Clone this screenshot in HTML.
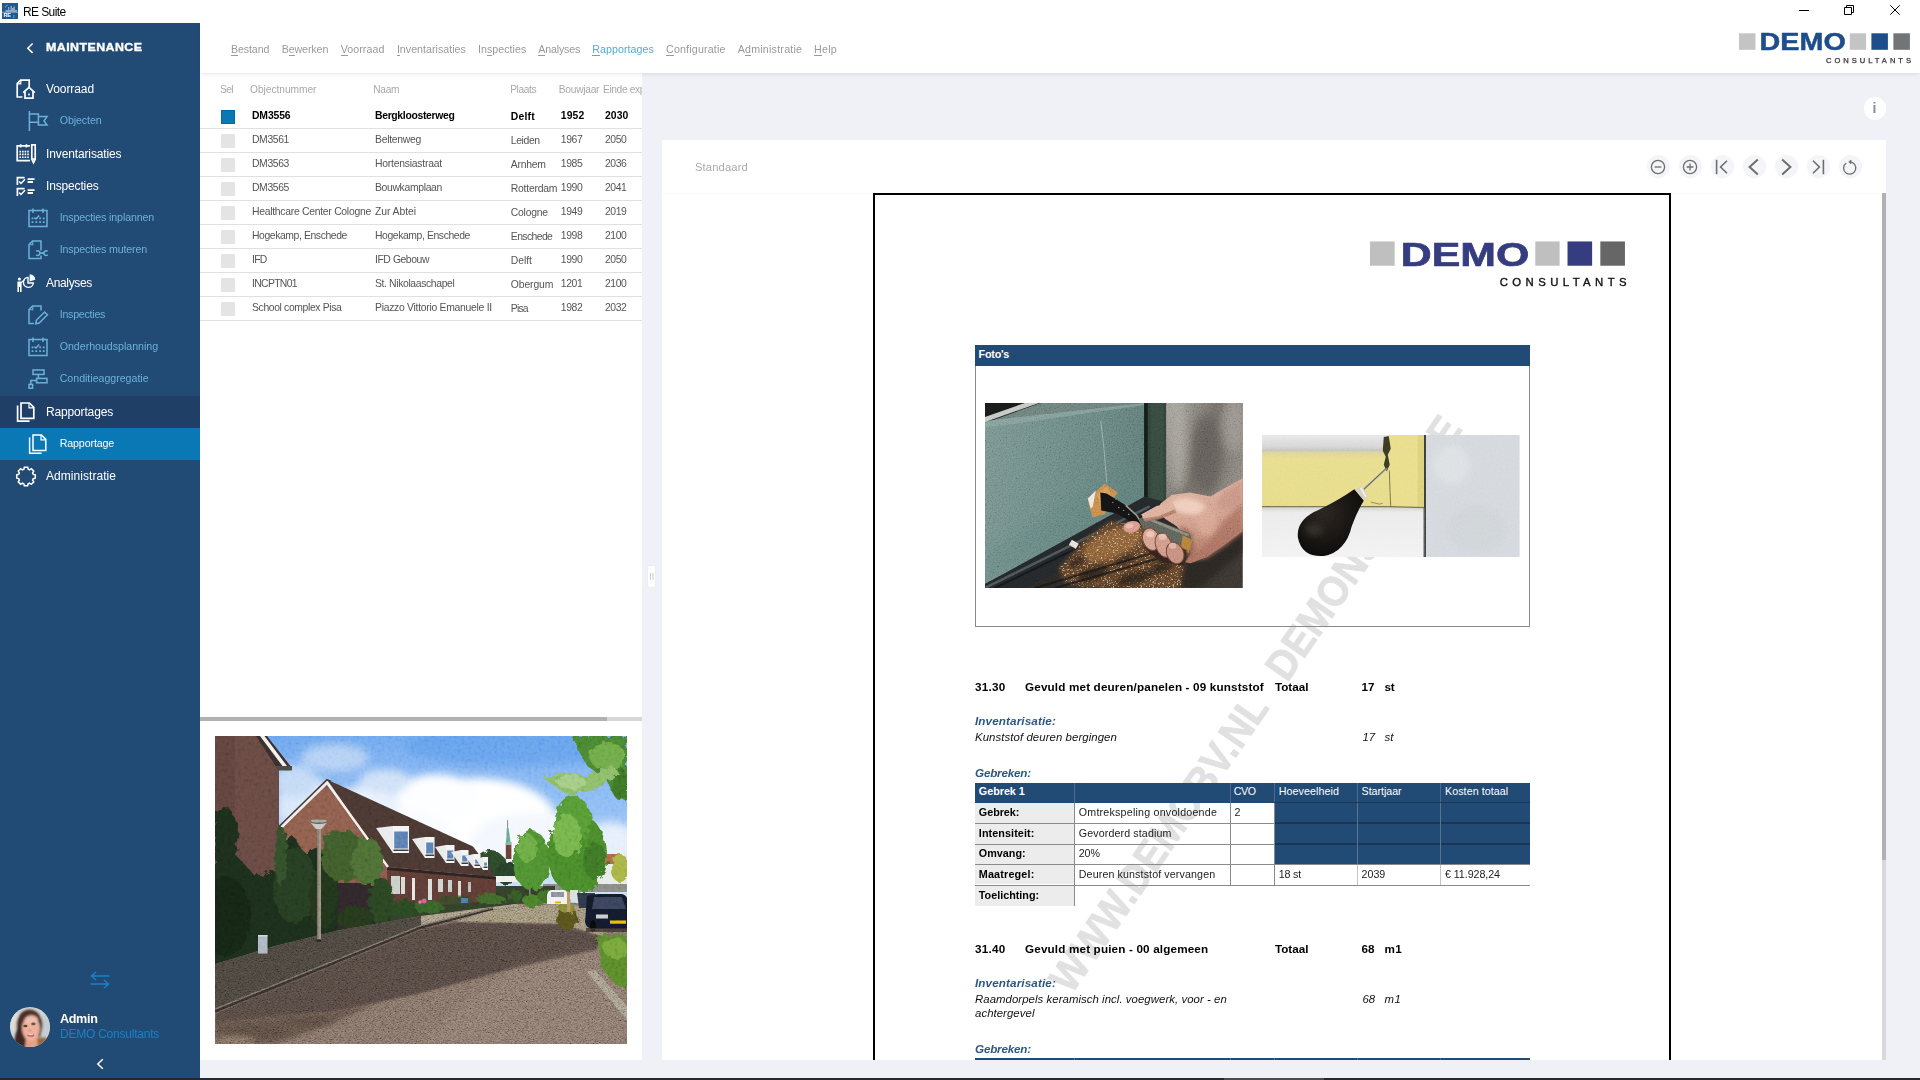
<!DOCTYPE html>
<html lang="nl"><head><meta charset="utf-8"><title>RE Suite</title><style>
*{box-sizing:border-box;margin:0;padding:0}
html,body{width:1920px;height:1080px;overflow:hidden;background:#f0f1f6;font-family:"Liberation Sans",sans-serif;}
#app{position:absolute;left:0;top:0;width:1920px;height:1080px;overflow:hidden;background:#f0f1f6}
.t{position:absolute;white-space:nowrap;}
.ic{position:absolute;overflow:visible}
.abs{position:absolute}
#sb{position:absolute;left:0;top:23px;width:200px;height:1055px;background:#214a75;overflow:hidden}
#title{position:absolute;left:0;top:0;width:1920px;height:23px;background:#fff;z-index:5}
#top{position:absolute;left:200px;top:23px;width:1720px;height:50px;background:#fff;box-shadow:0 2px 4px -1px rgba(90,95,130,.16);z-index:3}
.m{z-index:4}
u{text-decoration:underline;text-underline-offset:1.5px;text-decoration-thickness:1px}
</style></head><body><div id="app">
<div id="title">
<svg class="ic" style="left:2px;top:3px" width="16" height="16" viewBox="0 0 16 16"><rect width="16" height="16" fill="#1f5a8e"/><path d="M0 8.800H3.500V7H6V4H7.200V7H8.500V3H10V5H11.500V3.500H13V7H15V8.800H16V9.800H0Z" fill="#9db8d2" opacity=".85"/><path d="M3.200 4.800A3 3 0 0 1 6.200 2" fill="none" stroke="#39a3e6" stroke-width="1"/><rect x="11.300" y="12" width="1.200" height="3.200" fill="#39a3e6"/></svg>
<div class="t " style="left:3.60px;top:11.10px;font-size:5.60px;line-height:8px;height:8px;color:#fff;letter-spacing:-0.290px;font-weight:700;">RE</div>
<div class="t " style="left:23.00px;top:3.70px;font-size:12.00px;line-height:17px;height:17px;color:#000;letter-spacing:-0.607px;">RE Suite</div>
<svg class="ic" style="left:1798px;top:4px" width="104" height="13" viewBox="0 0 104 13" fill="none" stroke="#000" stroke-width="1"><path d="M1 6.5H11"/><path d="M46.5 3.5H53.500V10.500H46.500Z"/><path d="M48.500 3.500V1.500H55.500V8.500H53.500"/><path d="M92.300 1.300L101.700 10.700M101.700 1.300L92.300 10.700"/></svg>
</div>
<div id="top"></div>
<div class="t m" style="left:231.00px;top:41.80px;font-size:10.67px;line-height:15px;height:15px;color:#9a9a9a;letter-spacing:-0.122px;">Bestand</div>
<div class="abs m" style="left:231.00px;top:54.600px;width:7.12px;height:1px;background:#9a9a9a"></div>
<div class="t m" style="left:281.70px;top:41.80px;font-size:10.67px;line-height:15px;height:15px;color:#9a9a9a;letter-spacing:-0.106px;">Bewerken</div>
<div class="abs m" style="left:288.71px;top:54.600px;width:5.93px;height:1px;background:#9a9a9a"></div>
<div class="t m" style="left:340.70px;top:41.80px;font-size:10.67px;line-height:15px;height:15px;color:#9a9a9a;letter-spacing:0.062px;">Voorraad</div>
<div class="abs m" style="left:340.70px;top:54.600px;width:7.12px;height:1px;background:#9a9a9a"></div>
<div class="t m" style="left:396.90px;top:41.80px;font-size:10.67px;line-height:15px;height:15px;color:#9a9a9a;letter-spacing:0.020px;">Inventarisaties</div>
<div class="abs m" style="left:396.90px;top:54.600px;width:2.96px;height:1px;background:#9a9a9a"></div>
<div class="t m" style="left:478.00px;top:41.80px;font-size:10.67px;line-height:15px;height:15px;color:#9a9a9a;letter-spacing:0.026px;">Inspecties</div>
<div class="abs m" style="left:486.95px;top:54.600px;width:5.33px;height:1px;background:#9a9a9a"></div>
<div class="t m" style="left:538.30px;top:41.80px;font-size:10.67px;line-height:15px;height:15px;color:#9a9a9a;letter-spacing:-0.174px;">Analyses</div>
<div class="abs m" style="left:538.30px;top:54.600px;width:7.12px;height:1px;background:#9a9a9a"></div>
<div class="t m" style="left:592.30px;top:41.80px;font-size:10.67px;line-height:15px;height:15px;color:#57a9d3;letter-spacing:0.046px;">Rapportages</div>
<div class="abs m" style="left:592.30px;top:54.600px;width:7.71px;height:1px;background:#57a9d3"></div>
<div class="t m" style="left:666.00px;top:41.80px;font-size:10.67px;line-height:15px;height:15px;color:#9a9a9a;letter-spacing:0.181px;">Configuratie</div>
<div class="abs m" style="left:666.00px;top:54.600px;width:7.71px;height:1px;background:#9a9a9a"></div>
<div class="t m" style="left:737.70px;top:41.80px;font-size:10.67px;line-height:15px;height:15px;color:#9a9a9a;letter-spacing:0.226px;">Administratie</div>
<div class="abs m" style="left:745.04px;top:54.600px;width:5.93px;height:1px;background:#9a9a9a"></div>
<div class="t m" style="left:814.00px;top:41.80px;font-size:10.67px;line-height:15px;height:15px;color:#9a9a9a;letter-spacing:0.264px;">Help</div>
<div class="abs m" style="left:814.00px;top:54.600px;width:7.71px;height:1px;background:#9a9a9a"></div>
<svg class="ic m" style="left:1739.0px;top:33.0px" width="172.0" height="32.0" viewBox="0 0 172 32" preserveAspectRatio="none"><rect x="0" y="0.3" width="16.5" height="16.5" fill="#c4c4c4"/><text x="20.6" y="16.8" font-family="Liberation Sans, sans-serif" font-weight="700" font-size="23" fill="#1e4d8b" stroke="#1e4d8b" stroke-width="0.45" textLength="86.2" lengthAdjust="spacingAndGlyphs">DEMO</text><rect x="110.8" y="0.3" width="16.3" height="16.5" fill="#c4c4c4"/><rect x="132.4" y="0.3" width="16.5" height="16.5" fill="#1e4d8b"/><rect x="154.4" y="0.3" width="16.5" height="16.5" fill="#737478"/><text x="87" y="30.3" font-family="Liberation Sans, sans-serif" font-size="7.6" fill="#333" textLength="85" lengthAdjust="spacing" stroke="#333" stroke-width="0.25">CONSULTANTS</text></svg>
<div id="sb">
<div style="position:absolute;left:0;top:372.5px;width:200px;height:32.25px;background:#203f66"></div>
<div style="position:absolute;left:0;top:404.75px;width:200px;height:32.25px;background:#0a78b4"></div>
<svg class="ic" style="left:25px;top:18px" width="10" height="14" viewBox="0 0 10 14" fill="none" stroke="#fff" stroke-width="1.5"><path d="M7.600 2.500L2.800 7.200L7.600 11.900"/></svg>
<div class="t " style="left:45.90px;top:17.10px;font-size:10.60px;line-height:15px;height:15px;color:#fff;letter-spacing:0.378px;font-weight:700;transform-origin:0 50%;transform:scaleX(1.17);-webkit-text-stroke:0.35px #fff;">MAINTENANCE</div>
<svg class="ic" style="left:16.0px;top:56.0px" width="20" height="20" viewBox="0 0 20 20" fill="none" stroke="#fff" stroke-width="1.7" stroke-linejoin="miter" stroke-linecap="butt"><path d="M13.2 8V1.2H4.6L1.2 4.6V18H6.5"/><path d="M1.2 4.8H4.8V1.2" stroke-width="1.2"/><path d="M7.2 13.6L13 8.4L18.8 13.6M9 12.6V19.2H17V12.6"/><rect x="12.2" y="14.6" width="1.6" height="1.8" fill="#fff" stroke="none"/></svg>
<div class="t " style="left:46.00px;top:58.00px;font-size:12.00px;line-height:17px;height:17px;color:#fff;letter-spacing:-0.087px;">Voorraad</div>
<svg class="ic" style="left:27.5px;top:88.2px" width="20" height="20" viewBox="0 0 20 20" fill="none" stroke="#6bb2d9" stroke-width="1.5" stroke-linejoin="miter" stroke-linecap="butt"><path d="M1.4 0V20"/><path d="M1.4 3H10.4V11.2H1.4"/><path d="M10.4 5.6H19L16 9.8L19 14H10.4V11"/></svg>
<div class="t " style="left:59.70px;top:90.45px;font-size:10.67px;line-height:15px;height:15px;color:#6bb2d9;letter-spacing:-0.088px;">Objecten</div>
<svg class="ic" style="left:16.0px;top:120.5px" width="20" height="20" viewBox="0 0 20 20" fill="none" stroke="#fff" stroke-width="1.7" stroke-linejoin="miter" stroke-linecap="butt"><path d="M14 1.8H1.2V16.6H14"/><path d="M4.6 0.2V3.4M10.4 0.2V3.4" /><path d="M3.400 7.600H5M6 7.600H7.600M8.600 7.600H10.200M11.200 7.600H12.800M3.400 10.400H5M6 10.400H7.600M8.600 10.400H10.200M11.200 10.400H12.800M3.400 13.200H5M6 13.200H7.600M8.600 13.200H10.200M11.200 13.200H12.800" stroke-width="1.6"/><path d="M15.8 0.8H19.2V15.2L17.5 18.6L15.8 15.2Z"/><path d="M15.8 15H19.2" /></svg>
<div class="t " style="left:46.00px;top:122.50px;font-size:12.00px;line-height:17px;height:17px;color:#fff;letter-spacing:-0.125px;">Inventarisaties</div>
<svg class="ic" style="left:16.0px;top:152.8px" width="20" height="20" viewBox="0 0 20 20" fill="none" stroke="#fff" stroke-width="1.7" stroke-linejoin="miter" stroke-linecap="butt"><path d="M8.6 1.6H1.4V9M8.6 12.6H1.4V20" stroke-width="1.7"/><path d="M3.2 5.4L5 7.4L9 3.2M3.2 16.4L5 18.4L9 14.2" stroke-width="1.5"/><path d="M11.6 3.2H18.6M11.6 6H17M11.6 14.2H18.6M11.6 17H17" stroke-width="1.8"/></svg>
<div class="t " style="left:46.00px;top:154.75px;font-size:12.00px;line-height:17px;height:17px;color:#fff;letter-spacing:-0.153px;">Inspecties</div>
<svg class="ic" style="left:27.5px;top:185.0px" width="20" height="20" viewBox="0 0 20 20" fill="none" stroke="#6bb2d9" stroke-width="1.5" stroke-linejoin="miter" stroke-linecap="butt"><path d="M1 2.6H19V18.6H1Z"/><path d="M5 0.4V5M15 0.4V5"/><path d="M3.6 10.4H5.4M11.2 10.4H13M14.8 10.4H16.6M3.6 14.2H5.4M7.4 14.2H9.2M11.2 14.2H13M14.8 14.2H16.6" stroke-width="1.8"/><path d="M6.4 9.6L8 11L11.2 7.4" stroke-width="1.5"/></svg>
<div class="t " style="left:59.70px;top:187.20px;font-size:10.67px;line-height:15px;height:15px;color:#6bb2d9;letter-spacing:-0.139px;">Inspecties inplannen</div>
<svg class="ic" style="left:27.5px;top:217.2px" width="20" height="20" viewBox="0 0 20 20" fill="none" stroke="#6bb2d9" stroke-width="1.5" stroke-linejoin="miter" stroke-linecap="butt"><path d="M13 10.600V1H4.6L1 4.6V18.6H13V15.600"/><path d="M1 4.8H4.8V1" stroke-width="1.1"/><path d="M11.400 13.100H16.400" stroke-width="1.700"/><path d="M8.200 11.300A2.300 2.300 0 1 1 8.200 14.900M19.600 11.300A2.300 2.300 0 1 0 19.600 14.900" stroke-width="1.500"/></svg>
<div class="t " style="left:59.70px;top:219.45px;font-size:10.67px;line-height:15px;height:15px;color:#6bb2d9;letter-spacing:-0.147px;">Inspecties muteren</div>
<svg class="ic" style="left:16.0px;top:249.5px" width="20" height="20" viewBox="0 0 20 20" fill="none" stroke="#fff" stroke-width="1.7" stroke-linejoin="miter" stroke-linecap="butt"><circle cx="3.4" cy="6" r="1.5" fill="#fff" stroke="none"/><path d="M1.4 8.6H5.4L8.2 6.2L9 7L5.6 10V19H4V14H3V19H1.4Z" fill="#fff" stroke="none"/><path d="M12 4.4A5 5 0 1 0 17.4 10H12Z" stroke-width="1.4"/><path d="M13.6 1.2A5.4 5.4 0 0 1 19.2 6.8L13.6 8.4Z" fill="#fff" stroke="none"/></svg>
<div class="t " style="left:46.00px;top:251.50px;font-size:12.00px;line-height:17px;height:17px;color:#fff;letter-spacing:-0.336px;">Analyses</div>
<svg class="ic" style="left:27.5px;top:281.8px" width="20" height="20" viewBox="0 0 20 20" fill="none" stroke="#6bb2d9" stroke-width="1.5" stroke-linejoin="miter" stroke-linecap="butt"><path d="M13 5.4V1H4.6L1 4.6V18.6H6"/><path d="M1 4.8H4.8V1" stroke-width="1.1"/><path d="M8.4 15.2L16.6 7L19.4 9.8L11.2 18L7.8 18.8Z" stroke-width="1.5"/></svg>
<div class="t " style="left:59.70px;top:283.95px;font-size:10.67px;line-height:15px;height:15px;color:#6bb2d9;letter-spacing:-0.254px;">Inspecties</div>
<svg class="ic" style="left:27.5px;top:314.0px" width="20" height="20" viewBox="0 0 20 20" fill="none" stroke="#6bb2d9" stroke-width="1.5" stroke-linejoin="miter" stroke-linecap="butt"><path d="M1 2.6H19V18.6H1Z"/><path d="M5 0.4V5M15 0.4V5"/><path d="M3.6 10.4H5.4M11.2 10.4H13M14.8 10.4H16.6M3.6 14.2H5.4M7.4 14.2H9.2M11.2 14.2H13M14.8 14.2H16.6" stroke-width="1.8"/><path d="M6.4 9.6L8 11L11.2 7.4" stroke-width="1.5"/></svg>
<div class="t " style="left:59.70px;top:316.20px;font-size:10.67px;line-height:15px;height:15px;color:#6bb2d9;letter-spacing:-0.031px;">Onderhoudsplanning</div>
<svg class="ic" style="left:27.5px;top:346.2px" width="20" height="20" viewBox="0 0 20 20" fill="none" stroke="#6bb2d9" stroke-width="1.5" stroke-linejoin="miter" stroke-linecap="butt"><rect x="5" y="1" width="11" height="4.4"/><rect x="8.6" y="9.4" width="10.4" height="4.4"/><rect x="1" y="15.4" width="3.6" height="3.8"/><path d="M10.4 5.4V9.4M8.6 11.6H2.8V15.4"/></svg>
<div class="t " style="left:59.70px;top:348.45px;font-size:10.67px;line-height:15px;height:15px;color:#6bb2d9;letter-spacing:-0.032px;">Conditieaggregatie</div>
<svg class="ic" style="left:16.0px;top:378.5px" width="20" height="20" viewBox="0 0 20 20" fill="none" stroke="#fff" stroke-width="1.7" stroke-linejoin="miter" stroke-linecap="butt"><path d="M5 1H13.4L17.8 5.4V16.4H5Z"/><path d="M13 1.2V5.8H17.6" stroke-width="1.2"/><path d="M1.6 3.6V19.2H13.6" /></svg>
<div class="t " style="left:46.00px;top:380.50px;font-size:12.00px;line-height:17px;height:17px;color:#fff;letter-spacing:-0.155px;">Rapportages</div>
<svg class="ic" style="left:27.5px;top:410.8px" width="20" height="20" viewBox="0 0 20 20" fill="none" stroke="#fff" stroke-width="1.5" stroke-linejoin="miter" stroke-linecap="butt"><path d="M5 1H13.4L17.8 5.4V16.4H5Z"/><path d="M13 1.2V5.8H17.6" stroke-width="1.2"/><path d="M1.6 3.6V19.2H13.6" /></svg>
<div class="t " style="left:59.70px;top:412.95px;font-size:10.67px;line-height:15px;height:15px;color:#fff;letter-spacing:-0.126px;">Rapportage</div>
<svg class="ic" style="left:16.0px;top:443.0px" width="20" height="20" viewBox="0 0 20 20" fill="none" stroke="#fff" stroke-width="1.7" stroke-linejoin="miter" stroke-linecap="butt"><path d="M8.1 1.2h3.8l.5 2.2 1.6.7 2-1.2 2.6 2.7-1.2 1.9.7 1.7 2.2.5v3.8l-2.2.5-.7 1.6 1.2 2-2.7 2.6-1.9-1.2-1.7.7-.5 2.2H8.100l-.5-2.2-1.6-.7-2 1.200-2.600-2.700 1.200-1.900-.7-1.700-2.200-.5v-3.800l2.200-.5.7-1.600-1.200-2 2.700-2.600 1.900 1.200 1.700-.7z" transform="translate(10 10) scale(0.9) translate(-10 -11)"/></svg>
<div class="t " style="left:46.00px;top:445.00px;font-size:12.00px;line-height:17px;height:17px;color:#fff;letter-spacing:0.050px;">Administratie</div>
<svg class="ic" style="left:90px;top:948px" width="20" height="18" viewBox="0 0 20 18" fill="none" stroke="#1a82c4" stroke-width="1.5"><path d="M1.6 5H19.4M6 1L1.6 5L6 9M0.6 13H18.4M14 9L18.4 13L14 17"/></svg>
<svg class="ic" style="left:10px;top:984px" width="40" height="40" viewBox="0 0 40 40"><defs><clipPath id="avc"><circle cx="20" cy="20" r="20"/></clipPath><filter id="avb" x="-20%" y="-20%" width="140%" height="140%"><feGaussianBlur stdDeviation="1.1"/></filter><filter id="avb2" x="-20%" y="-20%" width="140%" height="140%"><feGaussianBlur stdDeviation="0.75"/></filter></defs><g clip-path="url(#avc)"><rect width="40" height="40" fill="#d3d6d5"/><g filter="url(#avb)"><ellipse cx="34" cy="20" rx="6" ry="12" fill="#c6ced3"/><ellipse cx="4" cy="14" rx="5" ry="10" fill="#deded8"/><ellipse cx="19.500" cy="18" rx="13" ry="15.500" fill="#4b2f28"/><path d="M7 20Q5 32 2 42H18V20Z" fill="#3f2620"/><path d="M27 16Q33 20 30.500 30L26 28Z" fill="#4b2f28"/><path d="M27 31L35.500 30L38 34L30 42H24Z" fill="#9a6a3c"/><path d="M16 29H27L28 42H15Z" fill="#e3a189"/><ellipse cx="21" cy="21.500" rx="9" ry="12.200" fill="#ecb19b"/><ellipse cx="21" cy="12.500" rx="7" ry="4.500" fill="#efbfae"/><path d="M11.500 15Q13 5.500 21 5.500Q28.500 6 30 15Q27 8.500 21.500 8.300Q15 8.500 12.500 17Z" fill="#523329"/></g><g filter="url(#avb2)"><ellipse cx="15.400" cy="19" rx="2.100" ry="1.300" fill="#5a423c"/><ellipse cx="23.400" cy="16.900" rx="2.200" ry="1.400" fill="#6b544d"/><ellipse cx="20.800" cy="28.200" rx="3.400" ry="1.500" fill="#d25a64"/><ellipse cx="20.600" cy="27.500" rx="2.500" ry="0.7" fill="#f2d7d2"/><ellipse cx="19.800" cy="23.500" rx="1.800" ry="1.100" fill="#e2987f"/></g></g></svg>
<div class="t " style="left:60.00px;top:986.60px;font-size:12.60px;line-height:18px;height:18px;color:#fff;letter-spacing:-0.339px;font-weight:700;">Admin</div>
<div class="t " style="left:60.00px;top:1003.00px;font-size:12.00px;line-height:17px;height:17px;color:#1a82c4;letter-spacing:-0.231px;">DEMO Consultants</div>
<svg class="ic" style="left:95px;top:1034px" width="10" height="14" viewBox="0 0 10 14" fill="none" stroke="#fff" stroke-width="1.5"><path d="M7.800 2.200L2.800 7L7.800 11.800"/></svg>
</div>
<div class="abs" style="left:200px;top:72px;width:442px;height:988px;background:#fff;overflow:hidden">
<div class="t " style="left:20.00px;top:10.50px;font-size:10.20px;line-height:14px;height:14px;color:#a9a9a9;letter-spacing:-0.581px;">Sel</div>
<div class="t " style="left:50.00px;top:10.50px;font-size:10.20px;line-height:14px;height:14px;color:#a9a9a9;letter-spacing:-0.032px;">Objectnummer</div>
<div class="t " style="left:173.30px;top:10.50px;font-size:10.20px;line-height:14px;height:14px;color:#a9a9a9;letter-spacing:-0.302px;">Naam</div>
<div class="t " style="left:310.20px;top:10.50px;font-size:10.20px;line-height:14px;height:14px;color:#a9a9a9;letter-spacing:-0.391px;">Plaats</div>
<div class="t " style="left:358.80px;top:10.50px;font-size:10.20px;line-height:14px;height:14px;color:#a9a9a9;letter-spacing:-0.253px;">Bouwjaar</div>
<div class="t " style="left:403.00px;top:10.50px;font-size:10.20px;line-height:14px;height:14px;color:#a9a9a9;letter-spacing:-0.374px;">Einde exp</div>
<div class="abs" style="left:21px;top:38px;width:14px;height:14px;background:#0b77b3;border:1px solid #0569a8"></div>
<div class="t " style="left:52.00px;top:35.80px;font-size:10.40px;line-height:15px;height:15px;color:#000;letter-spacing:-0.135px;font-weight:700;">DM3556</div>
<div class="t " style="left:175.00px;top:35.80px;font-size:10.40px;line-height:15px;height:15px;color:#000;letter-spacing:-0.325px;font-weight:700;">Bergkloosterweg</div>
<div class="t " style="left:310.80px;top:36.80px;font-size:10.40px;line-height:15px;height:15px;color:#000;letter-spacing:0.178px;font-weight:700;">Delft</div>
<div class="t " style="left:360.80px;top:35.80px;font-size:10.40px;line-height:15px;height:15px;color:#000;letter-spacing:0.092px;font-weight:700;">1952</div>
<div class="t " style="left:405.00px;top:35.80px;font-size:10.40px;line-height:15px;height:15px;color:#000;letter-spacing:0.092px;font-weight:700;">2030</div>
<div class="abs" style="left:0;top:56px;width:442px;height:1px;background:#e0e0e0"></div>
<div class="abs" style="left:21px;top:62px;width:14px;height:14px;background:#e4e4e4"></div>
<div class="t " style="left:52.00px;top:59.80px;font-size:10.40px;line-height:15px;height:15px;color:#555;letter-spacing:-0.385px;">DM3561</div>
<div class="t " style="left:175.00px;top:59.80px;font-size:10.40px;line-height:15px;height:15px;color:#555;letter-spacing:-0.285px;">Beltenweg</div>
<div class="t " style="left:310.80px;top:60.80px;font-size:10.40px;line-height:15px;height:15px;color:#555;letter-spacing:-0.371px;">Leiden</div>
<div class="t " style="left:360.80px;top:59.80px;font-size:10.40px;line-height:15px;height:15px;color:#555;letter-spacing:-0.408px;">1967</div>
<div class="t " style="left:405.00px;top:59.80px;font-size:10.40px;line-height:15px;height:15px;color:#555;letter-spacing:-0.408px;">2050</div>
<div class="abs" style="left:0;top:80px;width:442px;height:1px;background:#e0e0e0"></div>
<div class="abs" style="left:21px;top:86px;width:14px;height:14px;background:#e4e4e4"></div>
<div class="t " style="left:52.00px;top:83.80px;font-size:10.40px;line-height:15px;height:15px;color:#555;letter-spacing:-0.385px;">DM3563</div>
<div class="t " style="left:175.00px;top:83.80px;font-size:10.40px;line-height:15px;height:15px;color:#555;letter-spacing:-0.234px;">Hortensiastraat</div>
<div class="t " style="left:310.80px;top:84.80px;font-size:10.40px;line-height:15px;height:15px;color:#555;letter-spacing:-0.236px;">Arnhem</div>
<div class="t " style="left:360.80px;top:83.80px;font-size:10.40px;line-height:15px;height:15px;color:#555;letter-spacing:-0.408px;">1985</div>
<div class="t " style="left:405.00px;top:83.80px;font-size:10.40px;line-height:15px;height:15px;color:#555;letter-spacing:-0.408px;">2036</div>
<div class="abs" style="left:0;top:104px;width:442px;height:1px;background:#e0e0e0"></div>
<div class="abs" style="left:21px;top:110px;width:14px;height:14px;background:#e4e4e4"></div>
<div class="t " style="left:52.00px;top:107.80px;font-size:10.40px;line-height:15px;height:15px;color:#555;letter-spacing:-0.385px;">DM3565</div>
<div class="t " style="left:175.00px;top:107.80px;font-size:10.40px;line-height:15px;height:15px;color:#555;letter-spacing:-0.342px;">Bouwkamplaan</div>
<div class="t " style="left:310.80px;top:108.80px;font-size:10.40px;line-height:15px;height:15px;color:#555;letter-spacing:-0.228px;">Rotterdam</div>
<div class="t " style="left:360.80px;top:107.80px;font-size:10.40px;line-height:15px;height:15px;color:#555;letter-spacing:-0.408px;">1990</div>
<div class="t " style="left:405.00px;top:107.80px;font-size:10.40px;line-height:15px;height:15px;color:#555;letter-spacing:-0.408px;">2041</div>
<div class="abs" style="left:0;top:128px;width:442px;height:1px;background:#e0e0e0"></div>
<div class="abs" style="left:21px;top:134px;width:14px;height:14px;background:#e4e4e4"></div>
<div class="t " style="left:52.00px;top:131.80px;font-size:10.40px;line-height:15px;height:15px;color:#555;letter-spacing:-0.281px;">Healthcare Center Cologne</div>
<div class="t " style="left:175.00px;top:131.80px;font-size:10.40px;line-height:15px;height:15px;color:#555;letter-spacing:-0.069px;">Zur Abtei</div>
<div class="t " style="left:310.80px;top:132.80px;font-size:10.40px;line-height:15px;height:15px;color:#555;letter-spacing:-0.248px;">Cologne</div>
<div class="t " style="left:360.80px;top:131.80px;font-size:10.40px;line-height:15px;height:15px;color:#555;letter-spacing:-0.408px;">1949</div>
<div class="t " style="left:405.00px;top:131.80px;font-size:10.40px;line-height:15px;height:15px;color:#555;letter-spacing:-0.408px;">2019</div>
<div class="abs" style="left:0;top:152px;width:442px;height:1px;background:#e0e0e0"></div>
<div class="abs" style="left:21px;top:158px;width:14px;height:14px;background:#e4e4e4"></div>
<div class="t " style="left:52.00px;top:155.80px;font-size:10.40px;line-height:15px;height:15px;color:#555;letter-spacing:-0.407px;">Hogekamp, Enschede</div>
<div class="t " style="left:175.00px;top:155.80px;font-size:10.40px;line-height:15px;height:15px;color:#555;letter-spacing:-0.407px;">Hogekamp, Enschede</div>
<div class="t " style="left:310.80px;top:156.80px;font-size:10.40px;line-height:15px;height:15px;color:#555;letter-spacing:-0.594px;">Enschede</div>
<div class="t " style="left:360.80px;top:155.80px;font-size:10.40px;line-height:15px;height:15px;color:#555;letter-spacing:-0.408px;">1998</div>
<div class="t " style="left:405.00px;top:155.80px;font-size:10.40px;line-height:15px;height:15px;color:#555;letter-spacing:-0.408px;">2100</div>
<div class="abs" style="left:0;top:176px;width:442px;height:1px;background:#e0e0e0"></div>
<div class="abs" style="left:21px;top:182px;width:14px;height:14px;background:#e4e4e4"></div>
<div class="t " style="left:52.00px;top:179.80px;font-size:10.40px;line-height:15px;height:15px;color:#555;letter-spacing:-0.751px;">IFD</div>
<div class="t " style="left:175.00px;top:179.80px;font-size:10.40px;line-height:15px;height:15px;color:#555;letter-spacing:-0.437px;">IFD Gebouw</div>
<div class="t " style="left:310.80px;top:180.80px;font-size:10.40px;line-height:15px;height:15px;color:#555;letter-spacing:-0.077px;">Delft</div>
<div class="t " style="left:360.80px;top:179.80px;font-size:10.40px;line-height:15px;height:15px;color:#555;letter-spacing:-0.408px;">1990</div>
<div class="t " style="left:405.00px;top:179.80px;font-size:10.40px;line-height:15px;height:15px;color:#555;letter-spacing:-0.408px;">2050</div>
<div class="abs" style="left:0;top:200px;width:442px;height:1px;background:#e0e0e0"></div>
<div class="abs" style="left:21px;top:206px;width:14px;height:14px;background:#e4e4e4"></div>
<div class="t " style="left:52.00px;top:203.80px;font-size:10.40px;line-height:15px;height:15px;color:#555;letter-spacing:-0.660px;">INCPTN01</div>
<div class="t " style="left:175.00px;top:203.80px;font-size:10.40px;line-height:15px;height:15px;color:#555;letter-spacing:-0.368px;">St. Nikolaaschapel</div>
<div class="t " style="left:310.80px;top:204.80px;font-size:10.40px;line-height:15px;height:15px;color:#555;letter-spacing:-0.121px;">Obergum</div>
<div class="t " style="left:360.80px;top:203.80px;font-size:10.40px;line-height:15px;height:15px;color:#555;letter-spacing:-0.408px;">1201</div>
<div class="t " style="left:405.00px;top:203.80px;font-size:10.40px;line-height:15px;height:15px;color:#555;letter-spacing:-0.408px;">2100</div>
<div class="abs" style="left:0;top:224px;width:442px;height:1px;background:#e0e0e0"></div>
<div class="abs" style="left:21px;top:230px;width:14px;height:14px;background:#e4e4e4"></div>
<div class="t " style="left:52.00px;top:227.80px;font-size:10.40px;line-height:15px;height:15px;color:#555;letter-spacing:-0.370px;">School complex Pisa</div>
<div class="t " style="left:175.00px;top:227.80px;font-size:10.40px;line-height:15px;height:15px;color:#555;letter-spacing:-0.284px;">Piazzo Vittorio Emanuele II</div>
<div class="t " style="left:310.80px;top:228.80px;font-size:10.40px;line-height:15px;height:15px;color:#555;letter-spacing:-0.808px;">Pisa</div>
<div class="t " style="left:360.80px;top:227.80px;font-size:10.40px;line-height:15px;height:15px;color:#555;letter-spacing:-0.408px;">1982</div>
<div class="t " style="left:405.00px;top:227.80px;font-size:10.40px;line-height:15px;height:15px;color:#555;letter-spacing:-0.408px;">2032</div>
<div class="abs" style="left:0;top:248px;width:442px;height:1px;background:#e0e0e0"></div>
<div class="abs" style="left:0;top:645px;width:442px;height:4px;background:#d6d6d6"></div>
<div class="abs" style="left:0;top:645px;width:407px;height:4px;background:#b1b1b1"></div>
<svg class="ic" style="left:15px;top:664px;overflow:hidden" width="412" height="308" viewBox="0 0 412 308">
<defs>
<linearGradient id="sky" x1="0" y1="0" x2="0" y2="1"><stop offset="0" stop-color="#6aa5ee"/><stop offset="0.18" stop-color="#8dbaf2"/><stop offset="0.4" stop-color="#c6dcf7"/><stop offset="1" stop-color="#e6eefa"/></linearGradient>
<linearGradient id="skyr" x1="0" y1="0" x2="1" y2="0"><stop offset="0" stop-color="#7fb0ee" stop-opacity="0"/><stop offset="1" stop-color="#86b9f6" stop-opacity=".55"/></linearGradient>
<filter id="b2" x="-10%" y="-10%" width="120%" height="120%"><feGaussianBlur stdDeviation="2"/></filter>
<filter id="b1" x="-10%" y="-10%" width="120%" height="120%"><feGaussianBlur stdDeviation="1"/></filter>
<filter id="b4" x="-20%" y="-20%" width="140%" height="140%"><feGaussianBlur stdDeviation="4.5"/></filter>
<filter id="leaf" x="-10%" y="-10%" width="120%" height="120%"><feTurbulence type="fractalNoise" baseFrequency="0.16" numOctaves="2" seed="4" result="n"/><feDisplacementMap in="SourceGraphic" in2="n" scale="9"/><feGaussianBlur stdDeviation="0.6"/></filter>
<filter id="grain" x="0" y="0" width="100%" height="100%"><feTurbulence type="fractalNoise" baseFrequency="0.6 0.9" numOctaves="2" seed="7"/><feColorMatrix type="matrix" values="1.6 0 0 0 -0.3  1.6 0 0 0 -0.3  1.6 0 0 0 -0.3  0 0 0 0 1"/></filter>

<filter id="lgrain" x="0" y="0" width="100%" height="100%"><feTurbulence type="fractalNoise" baseFrequency="0.3" numOctaves="2" seed="3"/><feColorMatrix type="matrix" values="1.8 0 0 0 -0.4  1.8 0 0 0 -0.4  1.8 0 0 0 -0.4  0 0 0 0 1"/></filter>
<clipPath id="road"><path d="M0 228L60 210L125 194L206 180L300 168L345 166L412 170V308H0Z"/></clipPath>
<clipPath id="green"><path d="M0 70H65V140H175V154H206V185H125L0 228Z"/></clipPath>
</defs>
<rect width="412" height="308" fill="url(#sky)"/><rect width="412" height="130" fill="url(#skyr)"/>
<g filter="url(#b4)"><ellipse cx="300" cy="10" rx="110" ry="20" fill="#5b99ea" opacity=".6"/><ellipse cx="262" cy="86" rx="80" ry="44" fill="#fff"/><ellipse cx="222" cy="62" rx="42" ry="24" fill="#fdfeff"/><ellipse cx="320" cy="104" rx="64" ry="28" fill="#f4f8fe"/><ellipse cx="190" cy="104" rx="50" ry="32" fill="#fafcff"/><ellipse cx="92" cy="70" rx="30" ry="30" fill="#d9e8fa"/><ellipse cx="395" cy="108" rx="30" ry="22" fill="#e6effb"/><ellipse cx="120" cy="22" rx="34" ry="14" fill="#b4d0f5"/><ellipse cx="150" cy="70" rx="34" ry="20" fill="#e8f1fc"/><ellipse cx="170" cy="45" rx="26" ry="12" fill="#cfe1f8"/><ellipse cx="80" cy="45" rx="22" ry="16" fill="#c3daf6"/></g>
<g filter="url(#leaf)"><ellipse cx="275" cy="130" rx="16" ry="16" fill="#2d4a2b"/><ellipse cx="292" cy="137" rx="12" ry="11" fill="#26402a"/></g>
<path d="M292.600 84V92" stroke="#667" stroke-width="0.8"/><path d="M291 108L291.800 92H293.600L295.800 108Z" fill="#6fa893"/><rect x="290.600" y="106" width="6" height="3" fill="#7fb59f"/><rect x="290.800" y="109" width="5.600" height="14" fill="#6b4036"/>
<rect x="372" y="128" width="40" height="22" fill="#e9ebe6"/><path d="M382 128L392 118H404L408 128Z" fill="#b06a48"/><g filter="url(#leaf)"><ellipse cx="405" cy="132" rx="9" ry="14" fill="#a9b344"/></g><rect x="328" y="148" width="84" height="8" fill="#8a8a86"/><rect x="278" y="140" width="24" height="6" fill="#eef0ee"/>
<rect x="170" y="150" width="170" height="40" fill="#33402a"/>
<path d="M112 43.500L258 110.500L281 141L172 131Z" fill="#4a3832"/>

<path d="M172 131L281 141V165L172 172Z" fill="#5e3c34"/><path d="M172 131L281 141V143.500L172 134Z" fill="#2c2220"/>
<rect x="176" y="140" width="9" height="18" fill="#c9cfc8"/><rect x="186" y="141" width="4" height="17" fill="#d8dcd6"/><rect x="197" y="142" width="3" height="22" fill="#e6e6e2"/><rect x="213" y="143" width="4" height="21" fill="#d9dcd8"/><rect x="223" y="143" width="5" height="13" fill="#cfd3cc"/><rect x="233" y="144" width="4" height="12" fill="#c9cdc6"/><rect x="243" y="145" width="3" height="18" fill="#d8d8d4"/><rect x="253" y="146" width="3" height="10" fill="#bbb"/>
<path d="M161.0 92.0L178.0 90.0L178.0 117.0Z" fill="#e9ebec"/>
<rect x="178.0" y="90.0" width="16.0" height="27.0" fill="#f2f3f3"/>
<rect x="179.2" y="95.5" width="13.6" height="17.0" fill="#5b7fb2"/>
<rect x="178.5" y="113.5" width="15.0" height="1.5" fill="#3a3a3a"/>
<path d="M197.0 103.0L210.0 101.0L210.0 122.0Z" fill="#e9ebec"/>
<rect x="210.0" y="101.0" width="9.5" height="21.0" fill="#f2f3f3"/>
<rect x="211.2" y="106.5" width="7.1" height="11.0" fill="#5b7fb2"/>
<rect x="210.5" y="118.5" width="8.5" height="1.5" fill="#3a3a3a"/>
<path d="M220.0 111.0L231.0 109.0L231.0 127.0Z" fill="#e9ebec"/>
<rect x="231.0" y="109.0" width="8.5" height="18.0" fill="#f2f3f3"/>
<rect x="232.2" y="114.5" width="6.1" height="8.0" fill="#5b7fb2"/>
<rect x="231.5" y="123.5" width="7.5" height="1.5" fill="#3a3a3a"/>
<path d="M236.0 116.0L246.0 114.0L246.0 130.0Z" fill="#e9ebec"/>
<rect x="246.0" y="114.0" width="7.5" height="16.0" fill="#f2f3f3"/>
<rect x="247.2" y="119.5" width="5.1" height="6.0" fill="#5b7fb2"/>
<rect x="246.5" y="126.5" width="6.5" height="1.5" fill="#3a3a3a"/>
<path d="M250.0 120.0L259.0 118.0L259.0 132.0Z" fill="#e9ebec"/>
<rect x="259.0" y="118.0" width="6.5" height="14.0" fill="#f2f3f3"/>
<rect x="260.2" y="123.5" width="4.1" height="4.0" fill="#5b7fb2"/>
<rect x="259.5" y="128.5" width="5.5" height="1.5" fill="#3a3a3a"/>
<path d="M261.0 123.0L268.0 121.0L268.0 134.0Z" fill="#e9ebec"/>
<rect x="268.0" y="121.0" width="5.0" height="13.0" fill="#f2f3f3"/>
<rect x="269.2" y="126.5" width="2.6" height="3.0" fill="#5b7fb2"/>
<rect x="268.5" y="130.5" width="4.0" height="1.5" fill="#3a3a3a"/>
<path d="M112 49L63 96V160H172V131Z" fill="#87594c"/>
<path d="M112 49L146 94L120 140L85 150L64 120L63 96Z" fill="#94624f" opacity=".6" filter="url(#b2)"/>
<path d="M63 95L112 46.500L173 131" fill="none" stroke="#f4f1ec" stroke-width="2.200"/>
<path d="M62 92.500L112 43.800L116 45.500" fill="none" stroke="#4a3832" stroke-width="1.600"/>
<path d="M0 0H44L64 32V160H0Z" fill="#684943"/><path d="M0 0H20V160H0Z" fill="#5e403b" opacity=".6"/>
<path d="M41 0L63 33.500H76L77 32L52 0Z" fill="#3a2d2b"/><path d="M45 0L67.500 30H72L49.500 0Z" fill="#f3f1ee"/><path d="M60 30H77V34.500H63Z" fill="#4a4846"/>
<path d="M0 130H20V150H175V190L60 215L0 234Z" fill="#1f2f1d"/>
<path d="M123 147H156V188L123 198Z" fill="#30272a"/>
<g filter="url(#leaf)">
<path d="M0 75L14 72L24 90L22 120L40 140L62 135L66 108L78 100L90 118L100 112L122 118V196L60 214L0 232Z" fill="#1e2e1c"/>
<ellipse cx="10" cy="180" rx="26" ry="40" fill="#182618"/><ellipse cx="80" cy="150" rx="22" ry="38" fill="#263c20"/><ellipse cx="108" cy="162" rx="14" ry="30" fill="#22361e"/>
<ellipse cx="128" cy="120" rx="22" ry="26" fill="#3f5c2c"/><ellipse cx="152" cy="125" rx="16" ry="24" fill="#4d6e34"/><ellipse cx="118" cy="105" rx="10" ry="10" fill="#3f5d2e"/>
<ellipse cx="166" cy="165" rx="12" ry="24" fill="#2a4424"/><ellipse cx="140" cy="182" rx="18" ry="12" fill="#26391f"/><ellipse cx="190" cy="172" rx="14" ry="9" fill="#2b4a22"/><ellipse cx="214" cy="171" rx="14" ry="7" fill="#39642a"/>
<ellipse cx="66" cy="120" rx="6" ry="30" fill="#33502a"/>
</g>
<circle cx="209" cy="165" r="2.500" fill="#d65a8e"/><circle cx="205" cy="166" r="1.800" fill="#e07aa5"/>
<rect x="225" y="160" width="30" height="8" fill="#3a4a2c" filter="url(#b1)"/><rect x="246" y="162" width="7" height="5" fill="#4a7ab0"/>
<g filter="url(#leaf)"><ellipse cx="276" cy="163" rx="14" ry="5" fill="#3f6a2a"/><ellipse cx="300" cy="160" rx="8" ry="6" fill="#355a28"/></g>
<path d="M0 228L60 210L125 194L206 180L300 168L345 166L412 170V308H0Z" fill="#74645a"/>
<path d="M0 228L60 210L125 194L206 180L240 175L206 192L0 276Z" fill="#423d37"/>
<path d="M206 180L300 168L310 170L278 173L206 192Z" fill="#958a74"/>
<path d="M278 173L345 168L388 172V200L345 188L240 186Z" fill="#8f826c"/>
<path d="M0 277L206 193L240 186L345 188L387 201L381 214L300 232L206 257L120 276L40 283L0 290Z" fill="#4c3f3a" filter="url(#b1)"/>
<path d="M0 286L40 282L120 275L160 268L110 290L60 308H0Z" fill="#574840" filter="url(#b2)"/>
<g filter="url(#b2)" opacity=".6"><ellipse cx="40" cy="296" rx="30" ry="5" fill="#4d3f39"/><ellipse cx="95" cy="286" rx="24" ry="4" fill="#4d3f39"/><ellipse cx="20" cy="304" rx="20" ry="4" fill="#8a7766"/></g>
<path d="M300 232L381 214L412 250V308H200L260 260Z" fill="#84746a" opacity=".4" filter="url(#b4)"/>
<path d="M0 275.500L206 191.500L278 172.500" fill="none" stroke="#2f2a28" stroke-width="2.400"/>
<path d="M0 273L206 189.500L278 171.500" fill="none" stroke="#6a635a" stroke-width="1.500"/>
<path d="M372 236L380 234L412 270V284Z" fill="#968c7c"/>
<g clip-path="url(#road)" style="mix-blend-mode:overlay" opacity=".36"><rect x="0" y="165" width="412" height="143" filter="url(#grain)"/></g>
<rect x="43" y="199" width="9.500" height="18.500" fill="#aeb6c2"/><rect x="43" y="199" width="9.500" height="1.500" fill="#cfd5dc"/>
<rect x="102.400" y="91" width="3.600" height="113" fill="#9a9284"/><rect x="102.400" y="91" width="1.200" height="113" fill="#7d766a"/><ellipse cx="103.800" cy="204.500" rx="2.600" ry="1.200" fill="#222"/>
<path d="M94.500 85.500Q103.500 81.500 112.800 85.500L106.500 93H101Z" fill="#c9c9c2"/><ellipse cx="103.700" cy="85.500" rx="9.200" ry="2.400" fill="#5d5b55"/><ellipse cx="103.700" cy="85" rx="8.200" ry="1.600" fill="#a9a9a2"/>
<rect x="352" y="146" width="3.400" height="30" fill="#b89a62"/><rect x="314" y="150" width="1.500" height="18" fill="#777"/>
<g filter="url(#leaf)">
<ellipse cx="316" cy="124" rx="18" ry="30" fill="#4f9030"/><ellipse cx="312" cy="112" rx="10" ry="14" fill="#6cab45"/>
<ellipse cx="362" cy="118" rx="30" ry="40" fill="#4a8a2c"/><ellipse cx="358" cy="84" rx="18" ry="24" fill="#579a34"/><ellipse cx="352" cy="100" rx="14" ry="22" fill="#74b44c"/><ellipse cx="380" cy="125" rx="12" ry="18" fill="#3c7726"/>
<path d="M356 0H412V66L398 58L392 44L372 30L362 12Z" fill="#4a8530"/><ellipse cx="392" cy="20" rx="18" ry="14" fill="#6faa48"/><ellipse cx="405" cy="48" rx="8" ry="16" fill="#3c7427"/>
<path d="M328 42L345 36L372 40L398 30L404 38L380 52L356 60L342 52Z" fill="#8cbd68"/><ellipse cx="356" cy="46" rx="14" ry="7" fill="#a4cc84"/>
<path d="M383 202L396 198L412 199V254L398 246L384 228Z" fill="#5a8a2c"/><ellipse cx="400" cy="212" rx="12" ry="10" fill="#76a63a"/>
<ellipse cx="352" cy="182" rx="10.500" ry="12" fill="#58521f"/><ellipse cx="352" cy="172" rx="8" ry="5" fill="#8a8a3a"/>
<ellipse cx="318" cy="165" rx="10" ry="6" fill="#4a7f2a"/><ellipse cx="330" cy="160" rx="8" ry="6" fill="#3f7026"/>
</g>
<path d="M332 159Q333 154 337 154H349Q351.500 154 352 158V168H332Z" fill="#f0f0f2"/><rect x="336" y="156" width="13" height="5" fill="#8d939c"/><rect x="340" y="165.500" width="6" height="1.800" fill="#e0b400"/><rect x="355" y="154" width="8" height="9" fill="#ddd"/>
<path d="M362 157H380V172H364Z" fill="#2f3a4a"/>
<path d="M372 160Q376 158 384 158H406Q410 158 412 162V193H378Q371 192 370 186Z" fill="#141a2c"/><path d="M379 161H407L411 173H377Z" fill="#39445a"/><rect x="381" y="178.500" width="12" height="4" fill="#c9cdd0"/><rect x="395" y="184.500" width="16" height="3.200" fill="#e4c000"/><ellipse cx="378" cy="190" rx="3" ry="6" fill="#0a0a0c"/><rect x="371" y="192" width="41" height="4" fill="#3a332f" opacity=".8"/>
<rect x="352" y="164" width="3.400" height="12" fill="#b89a62"/>
<g style="mix-blend-mode:overlay" opacity=".10"><rect width="412" height="308" filter="url(#lgrain)"/></g>
</svg>
</div>
<div class="abs" style="left:648px;top:566px;width:7px;height:21px;background:#fff;border-radius:1px;box-shadow:0 0 1px rgba(0,0,0,.15)"></div>
<div class="abs" style="left:650px;top:573px;width:1px;height:7px;background:#ccc"></div><div class="abs" style="left:652px;top:573px;width:2px;height:7px;background:#e2e2e2"></div>
<div class="abs" style="left:662px;top:140px;width:1224px;height:920px;background:#fff"></div>
<div class="t " style="left:695.00px;top:159.20px;font-size:11.20px;line-height:16px;height:16px;color:#aaa;letter-spacing:0.147px;">Standaard</div>
<div class="abs" style="left:662.0px;top:193.0px;width:1220.0px;height:1px;background:#fafafb"></div>
<div class="abs" style="left:1646.5px;top:155.2px;width:23px;height:23px;border-radius:50%;background:#f4f5f9"></div><svg class="ic" style="left:1648.0px;top:156.7px" width="20" height="20" viewBox="0 0 20 20" fill="none" stroke="#6e6e6e" stroke-width="1.3"><circle cx="10" cy="10" r="6.6"/><path d="M6.600 10H13.400"/></svg>
<div class="abs" style="left:1678.5px;top:155.2px;width:23px;height:23px;border-radius:50%;background:#f4f5f9"></div><svg class="ic" style="left:1680.0px;top:156.7px" width="20" height="20" viewBox="0 0 20 20" fill="none" stroke="#6e6e6e" stroke-width="1.3"><circle cx="10" cy="10" r="6.6"/><path d="M6.600 10H13.400M10 6.600V13.400"/></svg>
<div class="abs" style="left:1710.5px;top:155.2px;width:23px;height:23px;border-radius:50%;background:#f4f5f9"></div><svg class="ic" style="left:1712.0px;top:156.7px" width="20" height="20" viewBox="0 0 20 20" fill="none" stroke="#6e6e6e" stroke-width="1.3"><path d="M4.600 2.800V17.200" stroke-width="1.6"/><path d="M15 3.800L8.600 10L15 16.200" stroke-width="1.6"/></svg>
<div class="abs" style="left:1742.5px;top:155.2px;width:23px;height:23px;border-radius:50%;background:#f4f5f9"></div><svg class="ic" style="left:1744.0px;top:156.7px" width="20" height="20" viewBox="0 0 20 20" fill="none" stroke="#6e6e6e" stroke-width="1.3"><path d="M13.800 2.400L5.600 10L13.800 17.600" stroke-width="2"/></svg>
<div class="abs" style="left:1774.5px;top:155.2px;width:23px;height:23px;border-radius:50%;background:#f4f5f9"></div><svg class="ic" style="left:1776.0px;top:156.7px" width="20" height="20" viewBox="0 0 20 20" fill="none" stroke="#6e6e6e" stroke-width="1.3"><path d="M6.200 2.400L14.400 10L6.200 17.600" stroke-width="2"/></svg>
<div class="abs" style="left:1806.5px;top:155.2px;width:23px;height:23px;border-radius:50%;background:#f4f5f9"></div><svg class="ic" style="left:1808.0px;top:156.7px" width="20" height="20" viewBox="0 0 20 20" fill="none" stroke="#6e6e6e" stroke-width="1.3"><path d="M15.400 2.800V17.200" stroke-width="1.6"/><path d="M5 3.800L11.400 10L5 16.200" stroke-width="1.6"/></svg>
<div class="abs" style="left:1838.5px;top:155.2px;width:23px;height:23px;border-radius:50%;background:#f4f5f9"></div><svg class="ic" style="left:1840.0px;top:156.7px" width="20" height="20" viewBox="0 0 20 20" fill="none" stroke="#6e6e6e" stroke-width="1.3"><path d="M9.600 4.900A6.100 6.100 0 1 1 6.200 6"/><path d="M11 3L8.800 4.900L11 6.800Z" stroke-width="0.8" fill="#6e6e6e"/></svg>
<div class="abs" style="left:1863.5px;top:97px;width:22.5px;height:22.5px;border-radius:50%;background:#fff"></div>
<div class="t" style="left:1872.4px;top:98.6px;font-size:14.2px;line-height:18px;color:#858da0;font-weight:700;transform:scaleX(1.0);transform-origin:0 0">i</div>
<div class="abs" style="left:1882.0px;top:193.0px;width:4.0px;height:867.0px;background:#d9d9d9;"></div>
<div class="abs" style="left:1882.0px;top:193.0px;width:4.0px;height:667.0px;background:#b1b1b1;"></div>
<div class="abs" style="left:873px;top:193px;width:798px;height:867px;overflow:hidden"><div class="abs" style="left:0;top:0;width:798px;height:900px;border:2px solid #000;background:#fff"></div></div>
<svg class="ic" style="left:873px;top:193px;overflow:hidden" width="798" height="867" viewBox="873 193 798 867"><text transform="translate(1071.2 995.3) rotate(-55.30) scale(1 1.09)" font-family="Liberation Sans, sans-serif" font-weight="700" font-size="39.0" fill="#e1e1e1" stroke="#e1e1e1" stroke-width="0.7" word-spacing="20.0" xml:space="preserve">WWW.DEMOBV.NL DEMONSTRATIE</text></svg>
<svg class="ic m" style="left:1370.0px;top:241.0px" width="256.6" height="47.1" viewBox="0 0 172 32" preserveAspectRatio="none"><rect x="0" y="0.3" width="16.5" height="16.5" fill="#bfbfbf"/><text x="20.6" y="16.8" font-family="Liberation Sans, sans-serif" font-weight="700" font-size="23" fill="#353c7f" stroke="#353c7f" stroke-width="0.45" textLength="86.2" lengthAdjust="spacingAndGlyphs">DEMO</text><rect x="110.8" y="0.3" width="16.3" height="16.5" fill="#bfbfbf"/><rect x="132.4" y="0.3" width="16.5" height="16.5" fill="#353c7f"/><rect x="154.4" y="0.3" width="16.5" height="16.5" fill="#666"/><text x="87" y="30.3" font-family="Liberation Sans, sans-serif" font-size="7.6" fill="#111" textLength="85" lengthAdjust="spacing" stroke="#111" stroke-width="0.25">CONSULTANTS</text></svg>
<div class="abs" style="left:974.5px;top:345.0px;width:555.5px;height:281.5px;background:transparent;border:1px solid #8a8a8a;"></div>
<div class="abs" style="left:974.5px;top:345.0px;width:555.5px;height:20.5px;background:#214a75;"></div>
<div class="t " style="left:978.60px;top:346.50px;font-size:10.80px;line-height:15px;height:15px;color:#fff;letter-spacing:-0.243px;font-weight:700;">Foto's</div>
<svg class="ic" style="left:985px;top:403.300px;overflow:hidden" width="257.500" height="185" viewBox="0 0 258 186" preserveAspectRatio="none">
<defs>
<linearGradient id="teal" x1="0" y1="0" x2="1" y2="0.25"><stop offset="0" stop-color="#78938e"/><stop offset="0.5" stop-color="#6c8884"/><stop offset="1" stop-color="#5f7a76"/></linearGradient>
<linearGradient id="wall1" x1="0" y1="0" x2="1" y2="0.6"><stop offset="0" stop-color="#a5a29b"/><stop offset="0.25" stop-color="#8d8983"/><stop offset="0.55" stop-color="#6d6863"/><stop offset="1" stop-color="#8a847d"/></linearGradient>
<linearGradient id="skin" x1="0" y1="0" x2="0.3" y2="1"><stop offset="0" stop-color="#e2b7a3"/><stop offset="0.6" stop-color="#cf9c88"/><stop offset="1" stop-color="#a8705f"/></linearGradient>
<filter id="p1b1" x="-10%" y="-10%" width="120%" height="120%"><feGaussianBlur stdDeviation="0.8"/></filter>
<filter id="p1b2" x="-20%" y="-20%" width="140%" height="140%"><feGaussianBlur stdDeviation="2.2"/></filter>
<filter id="p1b4" x="-20%" y="-20%" width="140%" height="140%"><feGaussianBlur stdDeviation="5"/></filter>
<filter id="dust" x="0" y="0" width="100%" height="100%"><feTurbulence type="fractalNoise" baseFrequency="0.5 0.7" numOctaves="2" seed="5"/><feColorMatrix type="matrix" values="0 0 0 0 0.68  0 0 0 0 0.44  0 0 0 0 0.24  3.4 3.4 0 0 -3.75"/></filter>
<filter id="p1g" x="0" y="0" width="100%" height="100%"><feTurbulence type="fractalNoise" baseFrequency="0.7" numOctaves="2" seed="2"/><feColorMatrix type="matrix" values="1.6 0 0 0 -0.3  1.6 0 0 0 -0.3  1.6 0 0 0 -0.3  0 0 0 0 1"/></filter>
<filter id="dust2" x="0" y="0" width="100%" height="100%"><feTurbulence type="fractalNoise" baseFrequency="0.8 0.5" numOctaves="1" seed="13"/><feColorMatrix type="matrix" values="0 0 0 0 0.90  0 0 0 0 0.80  0 0 0 0 0.62  0 4 4 0 -5.1"/></filter>
<clipPath id="dustc"><path d="M74 166L100 138L125 119L160 124L200 158L196 186H100L80 181Z"/></clipPath>
</defs>
<rect width="258" height="186" fill="#2b2927"/>
<path d="M160 130L258 128V186H140Z" fill="#3b3531"/>
<path d="M200 160L258 128V150L215 186H190Z" fill="#2a2624" filter="url(#p1b2)"/>
<rect x="180" y="0" width="78" height="110" fill="url(#wall1)"/>
<g filter="url(#p1b4)"><ellipse cx="222" cy="52" rx="16" ry="40" fill="#5f5a56" opacity=".8"/><ellipse cx="194" cy="40" rx="8" ry="50" fill="#aaa69f" opacity=".8"/><ellipse cx="250" cy="20" rx="12" ry="30" fill="#97918a"/></g>
<path d="M0 18L160 0V97L0 182Z" fill="url(#teal)"/>
<path d="M0 182L160 97V60L0 150Z" fill="#5d7f7a" opacity=".35" filter="url(#p1b4)"/>
<path d="M0 0H40L0 14Z" fill="#1a1a1a"/><path d="M0 14L40 0H54L0 19Z" fill="#c4c8c4"/><path d="M0 20L56 0H160V2L0 25Z" fill="#88a29e" opacity=".7"/>
<rect x="159.500" y="0" width="22" height="104" fill="#2f4239"/><rect x="159.500" y="0" width="3.500" height="100" fill="#141a17"/><rect x="166" y="0" width="13" height="98" fill="#36493f"/>
<path d="M0 182L160 94L181 100V116L40 186H0Z" fill="#23272a"/>
<path d="M0 186L165 104" stroke="#4a5556" stroke-width="2.500" fill="none"/><path d="M10 186L168 109" stroke="#15181a" stroke-width="2" fill="none"/>
<path d="M116 18L119 44L122 80" stroke="#a9c0bb" stroke-width="0.9" fill="none" opacity=".8"/>
<g filter="url(#p1b2)"><path d="M74 166L100 138L125 119L160 124L200 158L196 186H100L80 181Z" fill="#5f432b"/><ellipse cx="128" cy="142" rx="32" ry="13" transform="rotate(-24 128 142)" fill="#8a5f38"/></g>
<rect x="55" y="112" width="150" height="74" filter="url(#dust)" clip-path="url(#dustc)"/>
<rect x="55" y="112" width="150" height="74" filter="url(#dust2)" clip-path="url(#dustc)"/>
<g filter="url(#p1b2)" opacity=".75"><ellipse cx="108" cy="172" rx="16" ry="6" transform="rotate(-20 108 172)" fill="#221c18"/><ellipse cx="150" cy="176" rx="18" ry="6" transform="rotate(-15 150 176)" fill="#221c18"/><ellipse cx="176" cy="166" rx="12" ry="5" transform="rotate(-20 176 166)" fill="#221c18"/><ellipse cx="92" cy="160" rx="9" ry="4" transform="rotate(-30 92 160)" fill="#2a221c"/><ellipse cx="140" cy="158" rx="10" ry="3.500" transform="rotate(-24 140 158)" fill="#2a221c"/></g>
<path d="M50 186L170 150M70 186L175 156" stroke="#151515" stroke-width="2.200" fill="none" opacity=".75"/>
<path d="M103 96L120 81L133 90L128 97L120 112L108 115L105 106Z" fill="#c58a4c"/><path d="M103 96L111 88L108 104L106 106Z" fill="#efe6dc"/><path d="M112 92L122 84L128 96L118 108Z" fill="#dba15c" opacity=".8"/>
<rect x="85" y="139" width="8" height="6" fill="#e6e2da" transform="rotate(30 89 142)"/>
<path d="M115.500 90L122 91L143 104L157 119L152 123L132 111L116.500 108Z" fill="#141414"/>
<path d="M141 103L152 113L157 121" stroke="#b7b1a4" stroke-width="1.600" fill="none" opacity=".8"/>
<g fill="#8a857a"><circle cx="128" cy="100" r=".7"/><circle cx="134" cy="105" r=".8"/><circle cx="139" cy="108" r=".7"/><circle cx="144" cy="112" r=".8"/><circle cx="131" cy="97" r=".6"/></g>
<path d="M258 76L236 88L226 94L205 90L187 92.500L176 101L172 108L180 116L192 124L204 138L206 152L200 160L206 161L222 155L238 144L258 129Z" fill="url(#skin)"/>
<g filter="url(#p1b2)"><path d="M258 100L240 118L224 140L206 158L222 156L240 144L258 130Z" fill="#a86f5f" opacity=".85"/><path d="M258 78L238 90L232 104L246 108L258 100Z" fill="#c48f7f" opacity=".8"/><ellipse cx="204" cy="104" rx="17" ry="8" transform="rotate(8 204 104)" fill="#f1cfc0" opacity=".9"/><ellipse cx="222" cy="120" rx="10" ry="14" fill="#dba693" opacity=".7"/><path d="M196 122L208 132L210 150L204 158L198 140Z" fill="#8d5b4d" opacity=".8"/></g>
<path d="M154 117L160 113L205 131L208 140L203 150L196 147L158 126Z" fill="#5e6158"/><path d="M160 115L204 133" stroke="#9a9a90" stroke-width="2.500" fill="none" opacity=".7"/><path d="M198 133L208 138L204 151L196 147Z" fill="#b47d3c"/>
<path d="M158 128L202 148L200 164L176 160L160 146Z" fill="#33241f" filter="url(#p1b1)"/>
<path d="M156.500 112L172 103.500L188 100L192 108L174 115.500L160 118.500Z" fill="#dcae9b"/><path d="M158 116L174 113.500L190 107L192 110L175 117L161 119.500Z" fill="#a87060" opacity=".8"/>
<ellipse cx="147" cy="124.500" rx="8.600" ry="5.800" fill="#d8978a" transform="rotate(-12 147 124.500)"/><ellipse cx="145" cy="123.500" rx="4" ry="2.500" fill="#eab7aa" transform="rotate(-12 145 123.500)"/>
<ellipse cx="166.500" cy="137" rx="8.400" ry="11.500" fill="#d6a08e" transform="rotate(-20 166.500 137)" stroke="#6e4338" stroke-width="1"/><ellipse cx="165.500" cy="132" rx="4" ry="3" fill="#ecc3b3"/>
<ellipse cx="179" cy="143" rx="8" ry="12.500" fill="#cf9886" transform="rotate(-20 179 143)" stroke="#6e4338" stroke-width="1"/><ellipse cx="178" cy="134.500" rx="4" ry="3" fill="#e7bcab"/>
<ellipse cx="190.500" cy="151" rx="8.400" ry="11" fill="#c48c7b" transform="rotate(-25 190.500 151)" stroke="#6e4338" stroke-width="1"/><ellipse cx="188" cy="143.500" rx="3.800" ry="3" fill="#deb09f"/>
<g style="mix-blend-mode:overlay" opacity=".16"><rect width="258" height="186" filter="url(#p1g)"/></g>
</svg>
<svg class="ic" style="left:1262.200px;top:434.700px;overflow:hidden" width="257.500" height="122.500" viewBox="0 0 258 124" preserveAspectRatio="none">
<defs>
<linearGradient id="ytop" x1="0" y1="0" x2="0" y2="1"><stop offset="0" stop-color="#d9d0a0"/><stop offset="0.12" stop-color="#e8de8e"/><stop offset="1" stop-color="#e7dc88"/></linearGradient>
<linearGradient id="wtop" x1="0" y1="0" x2="0" y2="1"><stop offset="0" stop-color="#e9e9e9"/><stop offset="0.7" stop-color="#d6d6d6"/><stop offset="1" stop-color="#bdbdb8"/></linearGradient>
<linearGradient id="wbot" x1="0" y1="0" x2="0" y2="1"><stop offset="0" stop-color="#cfcfca"/><stop offset="0.1" stop-color="#ebebeb"/><stop offset="1" stop-color="#f3f3f3"/></linearGradient>
<radialGradient id="bulb" cx="0.4" cy="0.35" r="0.7"><stop offset="0" stop-color="#2a2520"/><stop offset="1" stop-color="#0b0a09"/></radialGradient>
<filter id="p2b1" x="-10%" y="-10%" width="120%" height="120%"><feGaussianBlur stdDeviation="0.7"/></filter>
<filter id="p2b3" x="-20%" y="-20%" width="140%" height="140%"><feGaussianBlur stdDeviation="3"/></filter>
<filter id="p2g" x="0" y="0" width="100%" height="100%"><feTurbulence type="fractalNoise" baseFrequency="0.6" numOctaves="2" seed="9"/><feColorMatrix type="matrix" values="1.6 0 0 0 -0.3  1.6 0 0 0 -0.3  1.6 0 0 0 -0.3  0 0 0 0 1"/></filter>
</defs>
<rect width="258" height="124" fill="#ececec"/>
<rect x="164" y="0" width="94" height="124" fill="#d5d9dd"/>
<g filter="url(#p2b3)"><ellipse cx="215" cy="95" rx="30" ry="24" fill="#cdd2d6" opacity=".6"/><ellipse cx="190" cy="30" rx="18" ry="20" fill="#dfe3e6" opacity=".8"/></g>
<rect x="0" y="0" width="124" height="17" fill="url(#wtop)"/>
<rect x="0" y="16.500" width="129" height="56" fill="url(#ytop)"/>
<rect x="127.500" y="0" width="35" height="73.500" fill="#e9de8a"/><rect x="156" y="0" width="6.500" height="73.500" fill="#ddd27c"/>
<rect x="0" y="73" width="163" height="51" fill="url(#wbot)"/>
<path d="M0 72.500H128L163 73.500" stroke="#5c5a3c" stroke-width="1.200" fill="none" opacity=".8"/>
<rect x="162.400" y="0" width="1.800" height="124" fill="#2e2e2c"/><rect x="161.400" y="74" width="2" height="50" fill="#6b6b68" opacity=".6"/>
<path d="M122 2L127 1L129 14L126 20L128 30L125 37L122 30L124 22L121 16Z" fill="#3a3a24" filter="url(#p2b1)"/>
<path d="M127.600 36L128.300 58L129 73" stroke="#6d693f" stroke-width="0.9" fill="none"/><path d="M109 68L118 70L121 69" stroke="#6d693f" stroke-width="0.7" fill="none"/>
<path d="M101 56L125 33.500" stroke="#6a6a66" stroke-width="1.600" fill="none"/><path d="M101.600 56.600L125.500 34" stroke="#d9d9d4" stroke-width="0.6" fill="none"/>
<path d="M93 55.500Q97 51.500 102 54.500L105 60.500Q105.500 64 101.500 66.500Z" fill="#d2d0c6"/><path d="M99 53.500L104 62.500" stroke="#f4f3ee" stroke-width="1.600"/>
<path d="M92.500 55L102 66.500Q96 76 90 92Q84 118 62 122.500Q40 124 36 104Q34 88 52 78Q74 68 92.500 55Z" fill="url(#bulb)"/>
<ellipse cx="52" cy="96" rx="9" ry="6" fill="#4a443c" opacity=".5" filter="url(#p2b3)"/>
<g style="mix-blend-mode:overlay" opacity=".10"><rect width="258" height="124" filter="url(#p2g)"/></g>
</svg>
<div class="t " style="left:975.00px;top:678.60px;font-size:11.70px;line-height:16px;height:16px;color:#000;letter-spacing:0.245px;font-weight:700;">31.30</div>
<div class="t " style="left:1025.00px;top:678.60px;font-size:11.70px;line-height:16px;height:16px;color:#000;letter-spacing:0.157px;font-weight:700;">Gevuld met deuren/panelen - 09 kunststof</div>
<div class="t " style="left:1275.00px;top:678.60px;font-size:11.70px;line-height:16px;height:16px;color:#000;letter-spacing:-0.030px;font-weight:700;">Totaal</div>
<div class="t " style="left:1361.50px;top:678.60px;font-size:11.70px;line-height:16px;height:16px;color:#000;letter-spacing:0.094px;font-weight:700;">17</div>
<div class="t " style="left:1384.40px;top:678.60px;font-size:11.70px;line-height:16px;height:16px;color:#000;letter-spacing:-0.201px;font-weight:700;">st</div>
<div class="t " style="left:975.00px;top:712.60px;font-size:11.70px;line-height:16px;height:16px;color:#2d5787;letter-spacing:0.112px;font-weight:700;font-style:italic;">Inventarisatie:</div>
<div class="t " style="left:975.00px;top:728.60px;font-size:11.40px;line-height:16px;height:16px;color:#111;letter-spacing:0.075px;font-style:italic;">Kunststof deuren bergingen</div>
<div class="t " style="left:1362.50px;top:728.60px;font-size:11.40px;line-height:16px;height:16px;color:#111;letter-spacing:-0.089px;font-style:italic;">17</div>
<div class="t " style="left:1384.40px;top:728.60px;font-size:11.40px;line-height:16px;height:16px;color:#111;letter-spacing:0.066px;font-style:italic;">st</div>
<div class="t " style="left:975.00px;top:765.20px;font-size:11.70px;line-height:16px;height:16px;color:#2d5787;letter-spacing:-0.207px;font-weight:700;font-style:italic;">Gebreken:</div>
<div class="abs" style="left:975.0px;top:782.5px;width:555.0px;height:20.0px;background:#214a75;"></div>
<div class="abs" style="left:1074.0px;top:782.5px;width:1px;height:20.0px;background:#4b6c90"></div>
<div class="abs" style="left:1229.8px;top:782.5px;width:1px;height:20.0px;background:#4b6c90"></div>
<div class="abs" style="left:1273.7px;top:782.5px;width:1px;height:20.0px;background:#4b6c90"></div>
<div class="abs" style="left:1356.7px;top:782.5px;width:1px;height:20.0px;background:#4b6c90"></div>
<div class="abs" style="left:1440.1px;top:782.5px;width:1px;height:20.0px;background:#4b6c90"></div>
<div class="t " style="left:978.80px;top:783.80px;font-size:10.80px;line-height:15px;height:15px;color:#fff;letter-spacing:-0.028px;font-weight:700;">Gebrek 1</div>
<div class="t " style="left:1233.80px;top:783.80px;font-size:10.67px;line-height:15px;height:15px;color:#fff;letter-spacing:-0.374px;">CVO</div>
<div class="t " style="left:1278.70px;top:783.80px;font-size:10.67px;line-height:15px;height:15px;color:#fff;letter-spacing:0.089px;">Hoeveelheid</div>
<div class="t " style="left:1361.60px;top:783.80px;font-size:10.67px;line-height:15px;height:15px;color:#fff;letter-spacing:-0.036px;">Startjaar</div>
<div class="t " style="left:1445.00px;top:783.80px;font-size:10.67px;line-height:15px;height:15px;color:#fff;letter-spacing:0.086px;">Kosten totaal</div>
<div class="abs" style="left:1274.2px;top:802.5px;width:255.8px;height:62.2px;background:#214a75;"></div>
<div class="abs" style="left:1274.2px;top:801.8px;width:255.8px;height:1.4px;background:#1d3553"></div>
<div class="abs" style="left:1274.2px;top:822.3px;width:255.8px;height:1.4px;background:#1d3553"></div>
<div class="abs" style="left:1274.2px;top:843.3px;width:255.8px;height:1.4px;background:#1d3553"></div>
<div class="abs" style="left:1356.7px;top:802.5px;width:1px;height:62.2px;background:#587493"></div>
<div class="abs" style="left:1440.1px;top:802.5px;width:1px;height:62.2px;background:#587493"></div>
<div class="abs" style="left:975.0px;top:803.0px;width:99.5px;height:19.5px;background:#ececec;"></div>
<div class="t " style="left:978.80px;top:804.75px;font-size:10.80px;line-height:15px;height:15px;color:#000;letter-spacing:-0.031px;font-weight:700;">Gebrek:</div>
<div class="t " style="left:1078.80px;top:804.75px;font-size:10.67px;line-height:15px;height:15px;color:#222;letter-spacing:0.222px;">Omtrekspeling onvoldoende</div>
<div class="abs" style="left:975.0px;top:823.5px;width:99.5px;height:20.0px;background:#ececec;"></div>
<div class="t " style="left:978.80px;top:825.50px;font-size:10.80px;line-height:15px;height:15px;color:#000;letter-spacing:0.084px;font-weight:700;">Intensiteit:</div>
<div class="t " style="left:1078.80px;top:825.50px;font-size:10.67px;line-height:15px;height:15px;color:#222;letter-spacing:0.122px;">Gevorderd stadium</div>
<div class="abs" style="left:975.0px;top:844.5px;width:99.5px;height:19.7px;background:#ececec;"></div>
<div class="t " style="left:978.80px;top:846.35px;font-size:10.80px;line-height:15px;height:15px;color:#000;letter-spacing:-0.001px;font-weight:700;">Omvang:</div>
<div class="t " style="left:1078.80px;top:846.35px;font-size:10.67px;line-height:15px;height:15px;color:#222;letter-spacing:-0.118px;">20%</div>
<div class="abs" style="left:975.0px;top:865.2px;width:99.5px;height:19.3px;background:#ececec;"></div>
<div class="t " style="left:978.80px;top:866.85px;font-size:10.80px;line-height:15px;height:15px;color:#000;letter-spacing:0.159px;font-weight:700;">Maatregel:</div>
<div class="t " style="left:1078.80px;top:866.85px;font-size:10.67px;line-height:15px;height:15px;color:#222;letter-spacing:0.121px;">Deuren kunststof vervangen</div>
<div class="abs" style="left:975.0px;top:885.5px;width:99.5px;height:20.0px;background:#ececec;"></div>
<div class="t " style="left:978.80px;top:887.50px;font-size:10.80px;line-height:15px;height:15px;color:#000;letter-spacing:-0.007px;font-weight:700;">Toelichting:</div>
<div class="t " style="left:1234.40px;top:804.75px;font-size:10.67px;line-height:15px;height:15px;color:#222;">2</div>
<div class="t " style="left:1278.70px;top:866.85px;font-size:10.67px;line-height:15px;height:15px;color:#222;letter-spacing:-0.126px;">18 st</div>
<div class="t " style="left:1361.60px;top:866.85px;font-size:10.67px;line-height:15px;height:15px;color:#222;letter-spacing:-0.009px;">2039</div>
<div class="t " style="left:1445.00px;top:866.85px;font-size:10.67px;line-height:15px;height:15px;color:#222;letter-spacing:-0.052px;">€ 11.928,24</div>
<div class="abs" style="left:975.0px;top:822.5px;width:299.2px;height:1px;background:#8a8a8a"></div>
<div class="abs" style="left:975.0px;top:843.5px;width:299.2px;height:1px;background:#8a8a8a"></div>
<div class="abs" style="left:975.0px;top:864.2px;width:299.2px;height:1px;background:#8a8a8a"></div>
<div class="abs" style="left:975.0px;top:884.5px;width:555.0px;height:1px;background:#8a8a8a"></div>
<div class="abs" style="left:1274.2px;top:864.2px;width:255.8px;height:1px;background:#8a8a8a"></div>
<div class="abs" style="left:1074.0px;top:802.5px;width:1px;height:103.5px;background:#8a8a8a"></div>
<div class="abs" style="left:1229.8px;top:802.5px;width:1px;height:82.5px;background:#8a8a8a"></div>
<div class="abs" style="left:1273.7px;top:802.5px;width:1px;height:82.5px;background:#8a8a8a"></div>
<div class="abs" style="left:1356.7px;top:864.7px;width:1px;height:20.3px;background:#c4c4c4"></div>
<div class="abs" style="left:1440.1px;top:864.7px;width:1px;height:20.3px;background:#c4c4c4"></div>
<div class="t " style="left:975.00px;top:940.60px;font-size:11.70px;line-height:16px;height:16px;color:#000;letter-spacing:0.245px;font-weight:700;">31.40</div>
<div class="t " style="left:1025.00px;top:940.60px;font-size:11.70px;line-height:16px;height:16px;color:#000;letter-spacing:0.157px;font-weight:700;">Gevuld met puien - 00 algemeen</div>
<div class="t " style="left:1275.00px;top:940.60px;font-size:11.70px;line-height:16px;height:16px;color:#000;letter-spacing:-0.030px;font-weight:700;">Totaal</div>
<div class="t " style="left:1361.50px;top:940.60px;font-size:11.70px;line-height:16px;height:16px;color:#000;letter-spacing:0.094px;font-weight:700;">68</div>
<div class="t " style="left:1384.60px;top:940.60px;font-size:11.70px;line-height:16px;height:16px;color:#000;letter-spacing:0.345px;font-weight:700;">m1</div>
<div class="t " style="left:975.00px;top:974.60px;font-size:11.70px;line-height:16px;height:16px;color:#2d5787;letter-spacing:0.112px;font-weight:700;font-style:italic;">Inventarisatie:</div>
<div class="t " style="left:975.00px;top:990.80px;font-size:11.40px;line-height:16px;height:16px;color:#111;letter-spacing:0.051px;font-style:italic;">Raamdorpels keramisch incl. voegwerk, voor - en</div>
<div class="t " style="left:975.00px;top:1004.80px;font-size:11.40px;line-height:16px;height:16px;color:#111;letter-spacing:0.052px;font-style:italic;">achtergevel</div>
<div class="t " style="left:1362.50px;top:990.80px;font-size:11.40px;line-height:16px;height:16px;color:#111;letter-spacing:-0.089px;font-style:italic;">68</div>
<div class="t " style="left:1384.60px;top:990.80px;font-size:11.40px;line-height:16px;height:16px;color:#111;letter-spacing:0.332px;font-style:italic;">m1</div>
<div class="t " style="left:975.00px;top:1041.30px;font-size:11.70px;line-height:16px;height:16px;color:#2d5787;letter-spacing:-0.207px;font-weight:700;font-style:italic;">Gebreken:</div>
<div class="abs" style="left:0;top:1057.8px;width:1920px;height:2.2px;overflow:hidden"><div class="abs" style="left:0;top:-1057.8px"><div class="abs" style="left:975.0px;top:1057.8px;width:555.0px;height:20.0px;background:#214a75;"></div>
<div class="abs" style="left:1074.0px;top:1057.8px;width:1px;height:20.0px;background:#4b6c90"></div>
<div class="abs" style="left:1229.8px;top:1057.8px;width:1px;height:20.0px;background:#4b6c90"></div>
<div class="abs" style="left:1273.7px;top:1057.8px;width:1px;height:20.0px;background:#4b6c90"></div>
<div class="abs" style="left:1356.7px;top:1057.8px;width:1px;height:20.0px;background:#4b6c90"></div>
<div class="abs" style="left:1440.1px;top:1057.8px;width:1px;height:20.0px;background:#4b6c90"></div></div></div>
<div class="abs" style="left:200.0px;top:1060.0px;width:1720.0px;height:18.0px;background:#f0f1f6;"></div>
<div class="abs" style="left:0.0px;top:1078.0px;width:1920.0px;height:2.0px;background:#25272c;"></div>
<div class="abs" style="left:1224.0px;top:1078.0px;width:100.0px;height:2.0px;background:#4a4c52;"></div>
</div></body></html>
